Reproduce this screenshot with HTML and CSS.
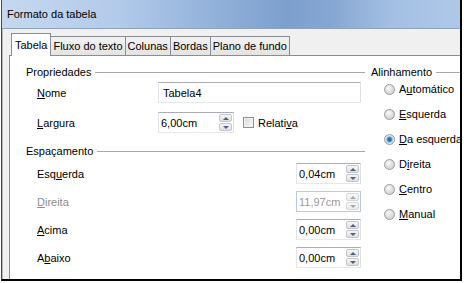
FILE: index.html
```html
<!DOCTYPE html>
<html>
<head>
  <link rel="stylesheet" href="styles.css">
</head>
<body>
  <div class="window">
    <div class="titlebar">Formato da tabela</div>
    <div class="client">
      <div class="tabs">
        <div class="tab active">Tabela</div>
        <div class="tab">Fluxo do texto</div>
        <div class="tab">Colunas</div>
        <div class="tab">Bordas</div>
        <div class="tab">Plano de fundo</div>
      </div>
      <div class="panel">
        <div class="col-main">
          <!-- Propriedades -->
          <div class="group-title">Propriedades</div>
          <div class="row first">
            <span class="label"><u>N</u>ome</span>
            <div class="field wide">Tabela4</div>
          </div>
          <div class="row">
            <span class="label"><u>L</u>argura</span>
            <div class="field spin width">6,00cm<span class="spin-btn"><i class="up"></i><i class="down"></i></span></div>
            <span class="check"><span class="box"></span><span>Relati<u>v</u>a</span></span>
          </div>

          <!-- Espaçamento -->
          <div class="group-title second">Espaçamento</div>
          <div class="row spacing first-spacing">
            <span class="label">Esq<u>u</u>erda</span>
            <div class="field spin">0,04cm<span class="spin-btn"><i class="up"></i><i class="down"></i></span></div>
          </div>
          <div class="row spacing disabled">
            <span class="label"><u>D</u>ireita</span>
            <div class="field spin">11,97cm<span class="spin-btn"><i class="up"></i><i class="down"></i></span></div>
          </div>
          <div class="row spacing">
            <span class="label"><u>A</u>cima</span>
            <div class="field spin">0,00cm<span class="spin-btn"><i class="up"></i><i class="down"></i></span></div>
          </div>
          <div class="row spacing">
            <span class="label">A<u>b</u>aixo</span>
            <div class="field spin">0,00cm<span class="spin-btn"><i class="up"></i><i class="down"></i></span></div>
          </div>
        </div>

        <div class="col-side">
          <div class="group-title">Alinhamento</div>
          <div class="radios">
            <div class="radio"><span class="dot"></span><span>A<u>u</u>tomático</span></div>
            <div class="radio"><span class="dot"></span><span><u>E</u>squerda</span></div>
            <div class="radio"><span class="dot checked"></span><span><u>D</u>a esquerda</span></div>
            <div class="radio"><span class="dot"></span><span>D<u>i</u>reita</span></div>
            <div class="radio"><span class="dot"></span><span><u>C</u>entro</span></div>
            <div class="radio"><span class="dot"></span><span><u>M</u>anual</span></div>
          </div>
        </div>
      </div>
    </div>
  </div>
</body>
</html>
```

FILE: styles.css
```css
body {
  margin: 0;
  width: 464px;
  height: 283px;
  overflow: hidden;
  background: #fff;
  font-family: "Liberation Sans", Arial, sans-serif;
  font-size: 11px;
  color: #000;
  white-space: nowrap;
}

.window {
  width: 458px;
  height: 279px;
  margin-left: 1px;
  border-left: 1px solid #3b4a5e;
  border-right: 2px solid #000;
  border-bottom: 2px solid #000;
  display: flex;
  flex-direction: column;
  overflow: hidden;
}

.titlebar {
  height: 28px;
  line-height: 28px;
  padding-left: 5px;
  border-bottom: 1px solid #8fa3bd;
  background: linear-gradient(90deg, #c6d8ef 0%, #b2cbea 25%, #94b3db 45%, #7d9fcd 62%, #86a7d3 72%, #a3bfe3 85%, #aec8e8 100%);
}

.client {
  flex: 1;
  min-height: 0;
  background: #f0f0f0;
  border-left: 1px solid #b9b9b9;
  padding: 4px 0 0 6px;
  display: flex;
  flex-direction: column;
}

/* tabs */
.tabs {
  display: flex;
  align-items: flex-end;
  height: 22px;
  padding-left: 2px;
  position: relative;
  z-index: 1;
}

.tab {
  height: 19px;
  box-sizing: border-box;
  line-height: 18px;
  padding: 0 2px;
  margin-left: -1px;
  border: 1px solid #898c95;
  border-bottom: none;
  background: linear-gradient(#f3f3f3, #e3e3e3);
}

.tab.active {
  height: 23px;
  line-height: 22px;
  margin: 0 0 -1px 0;
  padding: 0 3px;
  background: #fff;
}

.panel {
  flex: 1;
  display: flex;
  padding-top: 9px;
  background: #fff;
  border-top: 1px solid #898c95;
  border-left: 1px solid #898c95;
}

.col-main {
  width: 357px;
  flex-shrink: 0;
  box-sizing: border-box;
  padding-left: 16px;
}

.col-side {
  flex: 1;
  padding-left: 4px;
}

.group-title {
  display: flex;
  align-items: center;
  gap: 4px;
  height: 14px;
}

.group-title::after {
  content: "";
  flex: 1;
  border-top: 1px solid #a8a8a8;
}

.col-main .group-title {
  margin-right: 2px;
}

.group-title.second {
  margin-top: 11px;
}

/* rows */
.row {
  display: flex;
  align-items: center;
  height: 21px;
  margin-top: 9px;
  padding: 0 6px 0 11px;
}

.row.first {
  margin-top: 3px;
}

.row.spacing {
  justify-content: space-between;
  margin-top: 7px;
}

.row.first-spacing {
  margin-top: 5px;
}

.label {
  width: 121px;
}

.field {
  height: 21px;
  box-sizing: border-box;
  display: flex;
  align-items: center;
  padding-left: 4px;
  background: #fff;
  border: 1px solid;
  border-color: #abadb3 #dbdfe6 #e3e9ef #e2e3ea;
}

.field.wide {
  flex: 1;
}

.spin {
  width: 65px;
  padding-left: 2px;
}

.spin.width {
  width: 76px;
}

.spin-btn {
  display: flex;
  flex-direction: column;
  gap: 1px;
  width: 13px;
  height: 17px;
  margin-left: auto;
  margin-right: 1px;
}

.spin-btn i {
  flex: 1;
  display: flex;
  align-items: center;
  justify-content: center;
  border: 1px solid #c2c6cc;
  border-radius: 2px;
  background: linear-gradient(#f7f7f7, #dedede);
}

.spin-btn .up::after {
  content: "";
  border-left: 3px solid transparent;
  border-right: 3px solid transparent;
  border-bottom: 3px solid #4d5e87;
}

.spin-btn .down::after {
  content: "";
  border-left: 3px solid transparent;
  border-right: 3px solid transparent;
  border-top: 3px solid #4d5e87;
}

.disabled .label {
  color: #8d8d8d;
}

.disabled .field {
  color: #9a9a9a;
  border-color: #b6cae2;
}

.disabled .spin-btn i {
  border-color: #d4d6d9;
  background: linear-gradient(#f9f9f9, #ececec);
}

.disabled .spin-btn .up::after {
  border-bottom-color: #a6a6a6;
}

.disabled .spin-btn .down::after {
  border-top-color: #a6a6a6;
}

.check {
  display: flex;
  align-items: center;
  gap: 4px;
  margin-left: 9px;
}

.check .box {
  width: 11px;
  height: 11px;
  box-sizing: border-box;
  border: 1px solid #8e8f8f;
  background: linear-gradient(135deg, #d6d6d6, #fbfbfb);
  box-shadow: inset 0 0 0 1px #f4f4f4;
}

/* radios */
.radios {
  display: flex;
  flex-direction: column;
  gap: 5px;
  padding-left: 13px;
}

.radio {
  display: flex;
  align-items: center;
  gap: 4px;
  height: 20px;
}

.dot {
  width: 11px;
  height: 11px;
  flex-shrink: 0;
  box-sizing: border-box;
  border-radius: 50%;
  border: 1px solid #9a9a9a;
  background: radial-gradient(circle at 40% 35%, #fbfbfb 0, #e0e0e0 45%, #c9c9c9 100%);
}

.dot.checked {
  background: radial-gradient(circle, #1d5d9c 0, #3b85c7 2px, #9cc6ea 3px, #e6e6e6 4px, #cfcfcf 100%);
}
```
